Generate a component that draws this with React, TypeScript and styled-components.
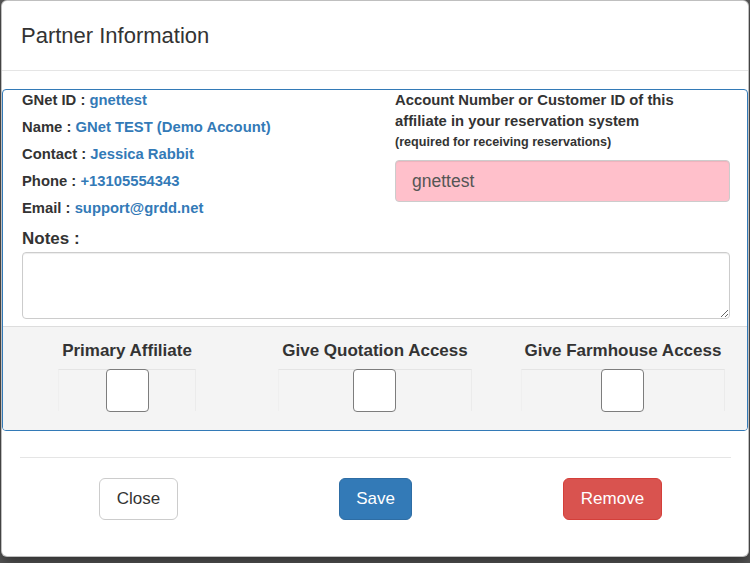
import React from 'react';
import styled, { createGlobalStyle } from 'styled-components';

const GlobalStyle = createGlobalStyle`
  html, body {
    margin: 0;
    padding: 0;
    background: #595959;
  }
  body {
    font-family: 'Liberation Sans', Arial, Helvetica, sans-serif;
    color: #333;
  }
  * { box-sizing: border-box; }
`;

const Page = styled.div`
  width: 750px;
  height: 563px;
  overflow: hidden;
  background: #595959;
`;

const Modal = styled.div`
  margin-left: 1px;
  width: 748px;
  height: 557px;
  background: #fff;
  border: 1px solid rgba(0, 0, 0, 0.25);
  border-radius: 6px;
  box-shadow: 0 5px 15px rgba(0, 0, 0, 0.5);
  display: flex;
  flex-direction: column;
`;

const Header = styled.div`
  height: 70px;
  padding: 18.5px 19px 0 19px;
  border-bottom: 1px solid #e5e5e5;
`;

const Title = styled.h4`
  margin: 0;
  font-size: 22px;
  line-height: 31px;
  font-weight: 400;
  color: #333;
`;

const Panel = styled.div`
  margin-top: 18px;
  border: 1px solid #337ab7;
  border-radius: 4px;
  overflow: hidden;
`;

const TopRow = styled.div`
  display: grid;
  grid-template-columns: 1fr 335px;
  padding: 0 17px 0 19px;
`;

const InfoList = styled.div`
  display: flex;
  flex-direction: column;
`;

const InfoRow = styled.div`
  font-size: 14.8px;
  line-height: 21px;
  font-weight: 700;
  margin-bottom: 6px;
  color: #333;
  white-space: nowrap;
`;

const InfoValue = styled.span`
  color: #337ab7;
`;

const AccountLabel = styled.label`
  display: block;
  font-size: 14.8px;
  line-height: 21px;
  font-weight: 700;
  margin-bottom: 7px;
`;

const Small = styled.small`
  display: block;
  font-size: 12.6px;
`;

const AccountInput = styled.input`
  display: block;
  width: 100%;
  height: 42px;
  padding: 0 16px;
  font-family: inherit;
  font-size: 17.5px;
  color: #555;
  background: pink;
  border: 1px solid #ccc;
  border-radius: 4px;
  box-shadow: inset 0 1px 1px rgba(0, 0, 0, 0.075);
  outline: none;
`;

const NotesBlock = styled.div`
  padding: 0 17px 0 19px;
`;

const NotesLabel = styled.label`
  display: block;
  margin: 4px 0 3px;
  font-size: 17px;
  line-height: 20px;
  font-weight: 700;
`;

const NotesArea = styled.textarea`
  display: block;
  width: 100%;
  height: 67px;
  margin-bottom: 7px;
  border: 1px solid #ccc;
  border-radius: 4px;
  box-shadow: inset 0 1px 1px rgba(0, 0, 0, 0.075);
  font-family: inherit;
  font-size: 15px;
  padding: 6px 12px;
  outline: none;
`;

const AccessSection = styled.div`
  display: grid;
  grid-template-columns: repeat(3, 1fr);
  background: #f4f4f4;
  border-top: 1px solid #ddd;
  padding: 14px 0 19px;
`;

const AccessColumn = styled.div`
  display: flex;
  justify-content: center;
`;

const MiniTable = styled.div`
  display: inline-flex;
  flex-direction: column;
  align-items: stretch;
`;

const AccessTitle = styled.div`
  padding: 0 4px;
  margin-bottom: 8px;
  font-size: 17px;
  line-height: 20px;
  font-weight: 700;
  text-align: center;
  white-space: nowrap;
`;

const CheckCell = styled.div`
  height: 42px;
  display: flex;
  justify-content: center;
  border-top: 1px solid #e4e4e4;
  border-left: 1px solid #efefef;
  border-right: 1px solid #ebebeb;
`;

const BigCheck = styled.input`
  appearance: none;
  margin: -1px 0 0;
  width: 43px;
  height: 43px;
  background: #fff;
  border: 1.5px solid #7d7d7d;
  border-radius: 4px;
`;

const Footer = styled.div`
  padding: 0 17px 0 18px;
`;

const Divider = styled.div`
  margin-top: 26px;
  border-top: 1px solid #e5e5e5;
`;

const ButtonRow = styled.div`
  display: grid;
  grid-template-columns: repeat(3, 1fr);
  padding-top: 20px;
`;

const ButtonCell = styled.div`
  display: flex;
  justify-content: center;
`;

const Button = styled.button<{ $variant: 'default' | 'primary' | 'danger' }>`
  height: 42px;
  padding: 0 16.5px;
  font-family: inherit;
  font-size: 17px;
  line-height: 40px;
  border-radius: 6px;
  border: 1px solid
    ${(p) => (p.$variant === 'primary' ? '#2e6da4' : p.$variant === 'danger' ? '#d43f3a' : '#ccc')};
  background: ${(p) => (p.$variant === 'primary' ? '#337ab7' : p.$variant === 'danger' ? '#d9534f' : '#fff')};
  color: ${(p) => (p.$variant === 'default' ? '#333' : '#fff')};
`;

const info = [
  { label: 'GNet ID', value: 'gnettest' },
  { label: 'Name', value: 'GNet TEST (Demo Account)' },
  { label: 'Contact', value: 'Jessica Rabbit' },
  { label: 'Phone', value: '+13105554343' },
  { label: 'Email', value: 'support@grdd.net' },
];

const access = ['Primary Affiliate', 'Give Quotation Access', 'Give Farmhouse Access'];

const App = () => {
  return (
    <Page>
      <GlobalStyle />
      <Modal>
        <Header>
          <Title>Partner Information</Title>
        </Header>
        <Panel>
          <TopRow>
            <InfoList>
              {info.map((row) => (
                <InfoRow key={row.label}>
                  {row.label} : <InfoValue>{row.value}</InfoValue>
                </InfoRow>
              ))}
            </InfoList>
            <div>
              <AccountLabel>
                Account Number or Customer ID of this
                <br />
                affiliate in your reservation system
                <Small>(required for receiving reservations)</Small>
              </AccountLabel>
              <AccountInput defaultValue="gnettest" />
            </div>
          </TopRow>
          <NotesBlock>
            <NotesLabel>Notes :</NotesLabel>
            <NotesArea />
          </NotesBlock>
          <AccessSection>
            {access.map((name) => (
              <AccessColumn key={name}>
                <MiniTable>
                  <AccessTitle>{name}</AccessTitle>
                  <CheckCell>
                    <BigCheck type="checkbox" />
                  </CheckCell>
                </MiniTable>
              </AccessColumn>
            ))}
          </AccessSection>
        </Panel>
        <Footer>
          <Divider />
          <ButtonRow>
            <ButtonCell>
              <Button $variant="default">Close</Button>
            </ButtonCell>
            <ButtonCell>
              <Button $variant="primary">Save</Button>
            </ButtonCell>
            <ButtonCell>
              <Button $variant="danger">Remove</Button>
            </ButtonCell>
          </ButtonRow>
        </Footer>
      </Modal>
    </Page>
  );
};

export default App;
